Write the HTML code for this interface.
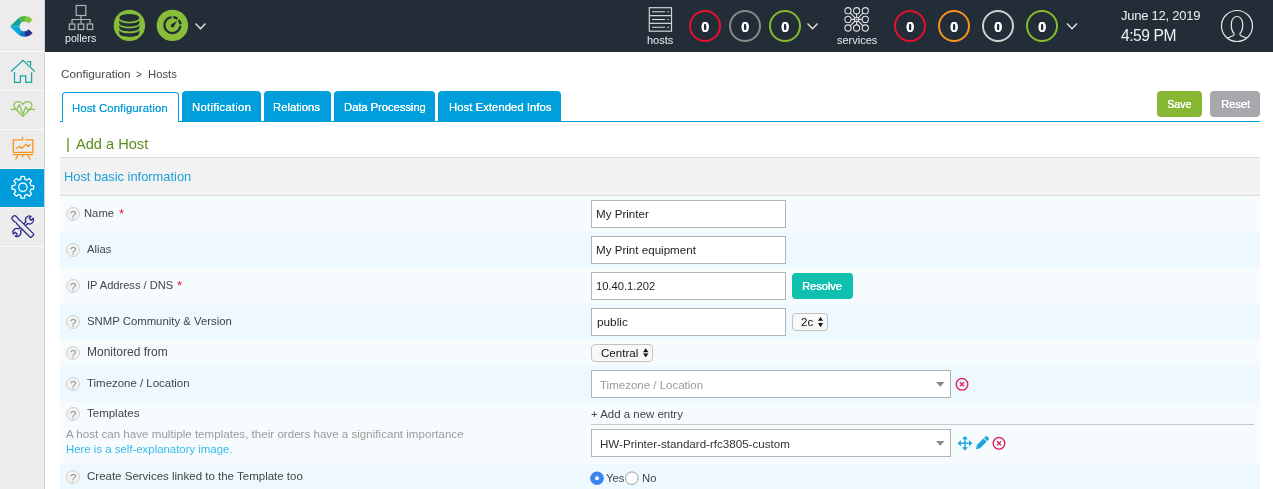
<!DOCTYPE html>
<html><head><meta charset="utf-8">
<style>
*{box-sizing:border-box;}
html,body{margin:0;padding:0;}
body{width:1273px;height:489px;overflow:hidden;position:relative;background:#fff;font-family:"Liberation Sans",sans-serif;}
.a{position:absolute;}
.t{position:absolute;white-space:nowrap;will-change:transform;}
#side{left:0;top:0;width:45px;height:489px;background:#ececec;border-right:1px solid #d2d2d2;}
.sep{position:absolute;left:0;width:44px;height:1px;background:#fafafa;}
#hdr{left:45px;top:0;width:1228px;height:52px;background:#232d38;}
.circ{position:absolute;width:32px;height:32px;border-radius:50%;border:2.5px solid;}
.tab{position:absolute;top:91px;height:30px;background:#009fdc;border-radius:4px 4px 0 0;}
.row{position:absolute;left:60px;width:1200px;}
.r1{background:#f6fcfe;}
.r2{background:#edf9fe;}
.help{position:absolute;width:14px;height:14px;border-radius:50%;border:1.4px solid #d0d0d0;background:#f2f2f2;}
.inp{position:absolute;left:591px;width:195px;height:28px;background:#fff;border:1px solid #b4b4b4;}
</style></head>
<body>
<div id="side" class="a">
<div class="sep" style="top:51px"></div>
<div class="sep" style="top:90px"></div>
<div class="sep" style="top:129px"></div>
<div class="sep" style="top:168px"></div>
<div class="sep" style="top:207px"></div>
<div class="sep" style="top:246px"></div>
<div class="a" style="left:0;top:169px;width:44px;height:38px;background:#009ddc"></div>
<svg class="a" style="left:0;top:0" width="44" height="246" viewBox="0 0 44 246">
    <!-- logo -->
    <defs><clipPath id="lc"><path d="M10 26.4 L18.3 18.2 Q21 16 24.8 16 Q29.5 16 32.6 19.8 L28.6 23.6 A5 5 0 1 0 28.6 29.2 L32.6 33 Q29.5 36.8 24.8 36.8 Q21 36.8 18.3 34.6 Z"/></clipPath></defs>
    <g clip-path="url(#lc)">
      <path d="M24.4 26.4 L5 26.4 L5 15 L14 10 Z" fill="#16a29a"/>
      <path d="M24.4 26.4 L14 10 L25.2 10 L25.2 26.4 Z" fill="#45b649"/>
      <path d="M24.4 26.4 L25.2 10 L40 10 L40 26.4 Z" fill="#8bc53f"/>
      <path d="M24.4 26.4 L5 26.4 L5 40 L14 42 Z" fill="#08a5e1"/>
      <path d="M24.4 26.4 L14 42 L25.6 42 L25.6 26.4 Z" fill="#0f78bf"/>
      <path d="M24.4 26.4 L25.6 42 L40 42 L40 26.4 Z" fill="#2d2e8f"/>
    </g>
    <!-- home -->
    <g fill="none" stroke="#1ba69f" stroke-width="1.25">
      <path d="M11.1 71.5 L23 60.4 L34.8 71.5"/>
      <path d="M27.3 61.7 H30.6 V66"/>
      <path d="M14.5 72.2 V82.4 H20.4 V75.8 H25.7 V82.4 H31.6 V72.2"/>
    </g>
    <!-- heart -->
    <g fill="none" stroke="#86c04d" stroke-width="1.2" stroke-linejoin="round">
      <path d="M22.9 116.3 L15.6 109 C13 106.4 13.3 102.6 16.4 101.9 C19 101.3 21.5 102.4 22.9 104.3 C24.3 102.4 26.8 101.3 29.4 101.9 C32.5 102.6 32.8 106.4 30.2 109 Z"/>
      <path d="M10.7 109.3 H16.8 L19.4 104.6 L22.9 114.3 L25.8 106.7 L27.4 109.6 L28.5 109.3 H34.9"/>
    </g>
    <!-- chart -->
    <g fill="none" stroke="#f7941d" stroke-width="1.3">
      <path d="M22.3 139.8 H13.3 V152.4 H32.8 V139.8 H25.4"/>
      <path d="M22.6 136.8 V140.5"/>
      <path d="M13 154.6 H33"/>
      <path d="M18 155 L15.5 159.5 M27.7 155 L30.3 159.5 M22.6 155 V157.5"/>
      <path d="M16 148.5 L19.8 146.3 L21.5 148.5 L26 144.3 L28.5 146.5 L30.3 144.2"/>
    </g>
    <!-- gear -->
    <g transform="translate(22.8 187.3)" fill="none" stroke="#fff" stroke-width="1.3">
      <circle r="4.2"/>
      <path stroke-linejoin="round" d="M-2.01 -8.05 L-1.71 -10.77 A10.9 10.9 0 0 1 1.71 -10.77 L2.01 -8.05 A8.3 8.3 0 0 1 4.27 -7.11 L6.41 -8.82 A10.9 10.9 0 0 1 8.82 -6.41 L7.11 -4.27 A8.3 8.3 0 0 1 8.05 -2.01 L10.77 -1.71 A10.9 10.9 0 0 1 10.77 1.71 L8.05 2.01 A8.3 8.3 0 0 1 7.11 4.27 L8.82 6.41 A10.9 10.9 0 0 1 6.41 8.82 L4.27 7.11 A8.3 8.3 0 0 1 2.01 8.05 L1.71 10.77 A10.9 10.9 0 0 1 -1.71 10.77 L-2.01 8.05 A8.3 8.3 0 0 1 -4.27 7.11 L-6.41 8.82 A10.9 10.9 0 0 1 -8.82 6.41 L-7.11 4.27 A8.3 8.3 0 0 1 -8.05 2.01 L-10.77 1.71 A10.9 10.9 0 0 1 -10.77 -1.71 L-8.05 -2.01 A8.3 8.3 0 0 1 -7.11 -4.27 L-8.82 -6.41 A10.9 10.9 0 0 1 -6.41 -8.82 L-4.27 -7.11 A8.3 8.3 0 0 1 -2.01 -8.05 Z"/>
    </g>
    <!-- tools -->
    <g fill="#ececec" stroke="#2b2e8c" stroke-width="1.3" stroke-linejoin="round">
      <path transform="translate(23.2 226.2) rotate(-45)" d="M-5.03 -1.2 L5.03 -1.2 A4 4 0 0 1 12.6 -1.4 L9.85 -1.4 L9.85 1.4 L12.6 1.4 A4 4 0 0 1 5.03 1.2 L-5.03 1.2 A4 4 0 0 1 -12.6 1.4 L-9.85 1.4 L-9.85 -1.4 L-12.6 -1.4 A4 4 0 0 1 -5.03 -1.2 Z"/>
      <path transform="translate(22.9 226.6) rotate(45)" d="M-12.5 -2.4 Q-14.2 -2.4 -14.2 0 Q-14.2 2.4 -12.5 2.4 L-9 2.4 Q-7.5 1.5 -6 2.4 L12.3 2.4 Q13.5 2.4 13.5 1.2 L13.5 -1.2 Q13.5 -2.4 12.3 -2.4 L-6 -2.4 Q-7.5 -1.5 -9 -2.4 Z"/>
    </g>
  </svg>
</div>
<div id="hdr" class="a"></div>
<svg class="a" style="left:0;top:0" width="1273" height="52" viewBox="0 0 1273 52">
  <!-- pollers -->
  <g fill="none" stroke="#b4b4b4" stroke-width="1.2">
    <rect x="76.2" y="5.5" width="9.6" height="10"/>
    <path d="M81 15.5 V19.5 M72 23.5 V19.5 H90 V23.5 M81 19.5 V23.5"/>
    <rect x="69.3" y="24" width="5.5" height="5.5"/>
    <rect x="78.2" y="24" width="5.5" height="5.5"/>
    <rect x="87.2" y="24" width="5.5" height="5.5"/>
  </g>
  <!-- db -->
  <circle cx="129.4" cy="25.4" r="15.7" fill="#88bd3a"/>
  <g fill="#232d38">
    <ellipse cx="129.25" cy="17.85" rx="10" ry="3.9"/>
    <path d="M119.25 19.6 C119.25 24.80 139.25 24.80 139.25 19.6 L139.25 22.7 C139.25 27.90 119.25 27.90 119.25 22.7 Z"/><path d="M119.25 24.5 C119.25 29.70 139.25 29.70 139.25 24.5 L139.25 27.6 C139.25 32.80 119.25 32.80 119.25 27.6 Z"/><path d="M119.25 29.4 C119.25 34.60 139.25 34.60 139.25 29.4 L139.25 33.1 C139.25 38.30 119.25 38.30 119.25 33.1 Z"/>
  </g>
  <!-- gauge -->
  <circle cx="172.4" cy="25.4" r="15.7" fill="#88bd3a"/>
  <path d="M173.15 17.08 A8.05 8.05 0 0 1 177.52 18.84 M178.71 20.03 A8.05 8.05 0 0 1 180.46 24.26 M180.46 25.94 A8.05 8.05 0 1 1 171.61 17.09" fill="none" stroke="#232d38" stroke-width="2.3"/>
  <path d="M171.2 24.6 L177.2 20.8 L173.6 26.9 Z" fill="#232d38"/>
  <circle cx="172.4" cy="25.7" r="1.7" fill="#232d38"/>
  <!-- chevron -->
  <path d="M195.5 23.5 L200.5 28.8 L205.5 23.5" fill="none" stroke="#e6e6e6" stroke-width="1.3"/>

  <!-- hosts icon -->
  <g fill="none" stroke="#d2d2d2" stroke-width="1.2">
    <rect x="649.3" y="7.7" width="22.2" height="23.5"/>
    <path d="M649.3 15.6 H671.5 M649.3 23.4 H671.5"/>
  </g>
  <g stroke="#e0e0e0" stroke-width="1.1">
    <path d="M652 11.7 H665 M652 19.5 H665 M652 27.3 H665"/>
  </g>
  <g fill="#e0e0e0"><rect x="667.5" y="11" width="1.2" height="1.4"/><rect x="667.5" y="18.8" width="1.2" height="1.4"/><rect x="667.5" y="26.6" width="1.2" height="1.4"/></g>
  <path d="M807.5 23.5 L812.5 28.8 L817.5 23.5" fill="none" stroke="#e6e6e6" stroke-width="1.3"/>

  <!-- services icon -->
  <g fill="none" stroke="#e0e0e0" stroke-width="1.1">
    <circle cx="848" cy="10.7" r="3.1"/><circle cx="856.6" cy="10.7" r="3.1"/><circle cx="865.3" cy="10.7" r="3.1"/>
    <circle cx="848" cy="19.4" r="3.1"/><circle cx="856.6" cy="19.4" r="2.2"/><circle cx="865.3" cy="19.4" r="3.1"/>
    <circle cx="848" cy="28" r="3.1"/><circle cx="856.6" cy="28" r="3.1"/><circle cx="865.3" cy="28" r="3.1"/>
    <path d="M851.2 19.4 H854.4 M858.8 19.4 H862 M856.6 13.8 V17.2 M856.6 21.6 V24.9 M850.2 12.9 L855 17.8 M863.1 12.9 L858.2 17.8 M850.2 25.8 L855 21 M863.1 25.8 L858.2 21"/>
  </g>
  <circle cx="856.6" cy="19.4" r="0.9" fill="#e0e0e0"/>
  <path d="M1067 23.5 L1072 28.8 L1077 23.5" fill="none" stroke="#e6e6e6" stroke-width="1.3"/>

  <!-- user -->
  <g fill="none" stroke="#e8e8e8" stroke-width="1.2">
    <circle cx="1237" cy="26" r="15.5"/>
    <path d="M1227.5 38 L1233.5 35.5 Q1234.3 35 1234 33.5 Q1230.5 29.5 1231.5 22.5 Q1232.5 16.5 1237 16.5 Q1241.5 16.5 1242.5 22.5 Q1243.5 29.5 1240 33.5 Q1239.7 35 1240.5 35.5 L1246.5 38"/>
  </g>
</svg>
<div class="t" style="left:65px;top:28px;font-size:10.6px;line-height:20px;color:#ebebeb;">pollers</div>
<div class="t" style="left:647px;top:30px;font-size:11px;line-height:20px;color:#ebebeb;">hosts</div>
<div class="t" style="left:837px;top:30px;font-size:11px;line-height:20px;color:#ebebeb;">services</div>
<div class="circ" style="left:689px;top:10px;border-color:#e8112d"></div>
<div class="t" style="left:700.7px;top:17px;font-size:14.6px;line-height:20px;color:#fff;font-weight:bold;text-shadow:0.3px 0 0 #fff;">0</div>
<div class="circ" style="left:729px;top:10px;border-color:#8a8a8a"></div>
<div class="t" style="left:740.7px;top:17px;font-size:14.6px;line-height:20px;color:#fff;font-weight:bold;text-shadow:0.3px 0 0 #fff;">0</div>
<div class="circ" style="left:769px;top:10px;border-color:#84bd2f"></div>
<div class="t" style="left:780.7px;top:17px;font-size:14.6px;line-height:20px;color:#fff;font-weight:bold;text-shadow:0.3px 0 0 #fff;">0</div>
<div class="circ" style="left:894px;top:10px;border-color:#e8112d"></div>
<div class="t" style="left:905.7px;top:17px;font-size:14.6px;line-height:20px;color:#fff;font-weight:bold;text-shadow:0.3px 0 0 #fff;">0</div>
<div class="circ" style="left:938px;top:10px;border-color:#f7931e"></div>
<div class="t" style="left:949.7px;top:17px;font-size:14.6px;line-height:20px;color:#fff;font-weight:bold;text-shadow:0.3px 0 0 #fff;">0</div>
<div class="circ" style="left:982px;top:10px;border-color:#cfcfcf"></div>
<div class="t" style="left:993.7px;top:17px;font-size:14.6px;line-height:20px;color:#fff;font-weight:bold;text-shadow:0.3px 0 0 #fff;">0</div>
<div class="circ" style="left:1026px;top:10px;border-color:#84bd2f"></div>
<div class="t" style="left:1037.7px;top:17px;font-size:14.6px;line-height:20px;color:#fff;font-weight:bold;text-shadow:0.3px 0 0 #fff;">0</div>
<div class="t" style="left:1121px;top:6px;font-size:13px;line-height:20px;color:#f0f0f0;letter-spacing:-0.25px;">June 12, 2019</div>
<div class="t" style="left:1121px;top:26px;font-size:15.6px;line-height:20px;color:#f0f0f0;letter-spacing:-0.45px;">4:59 PM</div>
<div class="t" style="left:60.5px;top:64px;font-size:11.7px;line-height:20px;color:#474747;">Configuration</div>
<div class="t" style="left:136px;top:65px;font-size:10px;line-height:20px;color:#474747;">&gt;</div>
<div class="t" style="left:148px;top:64px;font-size:11.3px;line-height:20px;color:#474747;">Hosts</div>
<div class="a" style="left:60px;top:121px;width:1200px;height:1px;background:#009fdc"></div>
<div class="a" style="left:62px;top:92px;width:117px;height:30px;background:#fff;border:1px solid #009fdc;border-bottom:none;border-radius:4px 4px 0 0;"></div>
<div class="tab" style="left:182px;width:79px;"></div>
<div class="tab" style="left:264px;width:67px;"></div>
<div class="tab" style="left:334px;width:101px;"></div>
<div class="tab" style="left:438px;width:123px;"></div>
<div class="t" style="left:72.4px;top:98px;font-size:11.3px;line-height:20px;color:#0d9fd8;letter-spacing:0.12px;text-shadow:0.1px 0 0 currentColor;">Host Configuration</div>
<div class="t" style="left:191.5px;top:97px;font-size:11.3px;line-height:20px;color:#fff;letter-spacing:0.27px;text-shadow:0.1px 0 0 currentColor;">Notification</div>
<div class="t" style="left:273.4px;top:97px;font-size:11.3px;line-height:20px;color:#fff;letter-spacing:-0.02px;text-shadow:0.1px 0 0 currentColor;">Relations</div>
<div class="t" style="left:343.5px;top:97px;font-size:11.3px;line-height:20px;color:#fff;letter-spacing:-0.08px;text-shadow:0.1px 0 0 currentColor;">Data Processing</div>
<div class="t" style="left:448.7px;top:97px;font-size:11.3px;line-height:20px;color:#fff;letter-spacing:0.04px;text-shadow:0.1px 0 0 currentColor;">Host Extended Infos</div>
<div class="a" style="left:1157px;top:91px;width:45px;height:26px;background:#88b833;border-radius:4px;"></div>
<div class="a" style="left:1210px;top:91px;width:50px;height:26px;background:#a7a8ab;border-radius:4px;"></div>
<div class="t" style="left:1167px;top:94px;font-size:10.6px;line-height:20px;color:#fff;text-shadow:0.4px 0 0 #fff;">Save</div>
<div class="t" style="left:1220.7px;top:94px;font-size:11.1px;line-height:20px;color:#fff;text-shadow:0.4px 0 0 #fff;">Reset</div>
<div class="t" style="left:65.5px;top:134px;font-size:15px;line-height:20px;color:#5b8a1e;">|</div>
<div class="t" style="left:75.5px;top:134px;font-size:14.6px;line-height:20px;color:#5b8a1e;">Add a Host</div>
<div class="row" style="top:157px;height:39px;background:#f2f2f2;border-top:1px solid #dedede;border-bottom:1px solid #dedede;"></div>
<div class="t" style="left:64.4px;top:167px;font-size:12.87px;line-height:20px;color:#1ba0d8;">Host basic information</div>
<div class="row r1" style="top:196px;height:36px;"></div>
<div class="row r2" style="top:232px;height:36px;"></div>
<div class="row r1" style="top:268px;height:36px;"></div>
<div class="row r2" style="top:304px;height:36px;"></div>
<div class="row r1" style="top:340px;height:26px;"></div>
<div class="row r2" style="top:366px;height:36px;"></div>
<div class="row r1" style="top:402px;height:62px;"></div>
<div class="row r2" style="top:464px;height:25px;"></div>
<div class="help" style="left:66.25px;top:207px;"></div>
<div class="t" style="left:70.2px;top:205px;font-size:11.4px;line-height:20px;color:#8c8c8c;">?</div>
<div class="t" style="left:84.3px;top:203px;font-size:11.25px;line-height:20px;color:#454545;">Name</div>
<div class="help" style="left:66.25px;top:243px;"></div>
<div class="t" style="left:70.2px;top:241px;font-size:11.4px;line-height:20px;color:#8c8c8c;">?</div>
<div class="t" style="left:86.9px;top:239px;font-size:11.2px;line-height:20px;color:#454545;">Alias</div>
<div class="help" style="left:66.25px;top:279px;"></div>
<div class="t" style="left:70.2px;top:277px;font-size:11.4px;line-height:20px;color:#8c8c8c;">?</div>
<div class="t" style="left:87.2px;top:275px;font-size:11.1px;line-height:20px;color:#454545;">IP Address / DNS</div>
<div class="help" style="left:66.25px;top:315px;"></div>
<div class="t" style="left:70.2px;top:313px;font-size:11.4px;line-height:20px;color:#8c8c8c;">?</div>
<div class="t" style="left:87.2px;top:311px;font-size:11.35px;line-height:20px;color:#454545;">SNMP Community &amp; Version</div>
<div class="help" style="left:66.25px;top:346px;"></div>
<div class="t" style="left:70.2px;top:344px;font-size:11.4px;line-height:20px;color:#8c8c8c;">?</div>
<div class="t" style="left:87.2px;top:342px;font-size:12px;line-height:20px;color:#454545;">Monitored from</div>
<div class="help" style="left:66.25px;top:377px;"></div>
<div class="t" style="left:70.2px;top:375px;font-size:11.4px;line-height:20px;color:#8c8c8c;">?</div>
<div class="t" style="left:87.2px;top:373px;font-size:11.45px;line-height:20px;color:#454545;">Timezone / Location</div>
<div class="help" style="left:66.25px;top:407px;"></div>
<div class="t" style="left:70.2px;top:405px;font-size:11.4px;line-height:20px;color:#8c8c8c;">?</div>
<div class="t" style="left:87.4px;top:403px;font-size:11.5px;line-height:20px;color:#454545;">Templates</div>
<div class="help" style="left:66.25px;top:470px;"></div>
<div class="t" style="left:70.2px;top:468px;font-size:11.4px;line-height:20px;color:#8c8c8c;">?</div>
<div class="t" style="left:87.2px;top:466px;font-size:11.5px;line-height:20px;color:#454545;">Create Services linked to the Template too</div>
<div class="t" style="left:118.5px;top:204px;font-size:13px;line-height:20px;color:#e8143c;">*</div>
<div class="t" style="left:177px;top:276px;font-size:13px;line-height:20px;color:#e8143c;">*</div>
<div class="inp" style="top:200px;"></div>
<div class="inp" style="top:236px;"></div>
<div class="inp" style="top:272px;"></div>
<div class="inp" style="top:308px;"></div>
<div class="t" style="left:596.4px;top:204px;font-size:11.6px;line-height:20px;color:#1e1e1e;">My Printer</div>
<div class="t" style="left:596.4px;top:240px;font-size:11.6px;line-height:20px;color:#1e1e1e;">My Print equipment</div>
<div class="t" style="left:596.1px;top:276px;font-size:11.2px;line-height:20px;color:#1e1e1e;">10.40.1.202</div>
<div class="t" style="left:596.5px;top:312px;font-size:11.8px;line-height:20px;color:#1e1e1e;">public</div>
<div class="a" style="left:792px;top:273px;width:61px;height:26px;background:#10bfae;border-radius:4px;"></div>
<div class="t" style="left:802.2px;top:276px;font-size:11px;line-height:20px;color:#fff;text-shadow:0.4px 0 0 #fff;">Resolve</div>
<div class="a" style="left:792px;top:313px;width:36px;height:18px;background:#f8f8f8;border:1px solid #c2c2c2;border-radius:4px;"></div>
<div class="t" style="left:801.3px;top:312px;font-size:11.6px;line-height:20px;color:#111;">2c</div>
<div class="a" style="left:591px;top:344px;width:62px;height:18px;background:#f8f8f8;border:1px solid #c2c2c2;border-radius:4px;"></div>
<div class="t" style="left:600.6px;top:343px;font-size:11.6px;line-height:20px;color:#111;">Central</div>
<div class="inp" style="top:370px;width:360px;"></div>
<div class="t" style="left:600.2px;top:375px;font-size:11.5px;line-height:20px;color:#9a9a9a;">Timezone / Location</div>
<div class="t" style="left:591.3px;top:404px;font-size:11.45px;line-height:20px;color:#454545;">+ Add a new entry</div>
<div class="a" style="left:591px;top:424px;width:663px;height:1px;background:#c8c8c8"></div>
<div class="inp" style="top:429px;width:360px;"></div>
<div class="t" style="left:600.4px;top:434px;font-size:11.6px;line-height:20px;color:#333;">HW-Printer-standard-rfc3805-custom</div>
<div class="t" style="left:66.3px;top:424px;font-size:11.6px;line-height:20px;color:#9b9b9b;">A host can have multiple templates, their orders have a significant importance</div>
<div class="t" style="left:66px;top:439px;font-size:11.4px;line-height:20px;color:#37b8ec;">Here is a self-explanatory image.</div>
<div class="t" style="left:606.4px;top:468px;font-size:11.3px;line-height:20px;color:#454545;">Yes</div>
<div class="t" style="left:641.9px;top:468px;font-size:11.3px;line-height:20px;color:#454545;">No</div>
<svg class="a" style="left:0;top:0" width="1273" height="489" viewBox="0 0 1273 489">
  <!-- select arrows -->
  <path d="M818 320.8 L820.5 316.9 L823 320.8 Z M818 323.1 L823 323.1 L820.5 327.2 Z" fill="#111"/>
  <path d="M643.1 352.2 L645.75 348.3 L648.4 352.2 Z M643.1 353.4 L648.4 353.4 L645.75 357.3 Z" fill="#111"/>
  <path d="M936 382 H944.5 L940.25 386.8 Z" fill="#888"/>
  <path d="M936 441 H944.5 L940.25 445.8 Z" fill="#888"/>
  <!-- red x circles -->
  <g fill="none" stroke="#e0245e" stroke-width="1.4">
    <circle cx="962" cy="384.3" r="5.8"/>
    <path d="M960 382.3 L964 386.3 M964 382.3 L960 386.3"/>
    <circle cx="999" cy="443.3" r="5.8"/>
    <path d="M997 441.3 L1001 445.3 M1001 441.3 L997 445.3"/>
  </g>
  <!-- move icon -->
  <g fill="#1fa3dc">
    <path d="M965 436 L968 439.2 H961.8 Z M965 450.5 L961.8 447.3 H968 Z M957.7 443.2 L960.9 440 V446.4 Z M972.3 443.2 L969.1 440 V446.4 Z"/>
    <rect x="964.3" y="438.5" width="1.4" height="9.5"/>
    <rect x="960.5" y="442.5" width="9" height="1.4"/>
  </g>
  <!-- pencil -->
  <g fill="#1fa3dc" transform="translate(982.2 442.9) rotate(-45) scale(1.08)">
    <path d="M-4.8 -2.1 L3.8 -2.1 L3.8 2.1 L-4.8 2.1 Z M4.6 -2.1 L5.9 -2.1 Q7.7 -2.1 7.7 0 Q7.7 2.1 5.9 2.1 L4.6 2.1 Z M-4.8 -2.1 L-8.2 0 L-4.8 2.1 Z"/>
  </g>
  <!-- radios -->
  <circle cx="597" cy="478.2" r="6.8" fill="#3a86f0"/>
  <circle cx="597" cy="478.2" r="2" fill="#fff"/>
  <circle cx="631.8" cy="478.2" r="6.3" fill="#fff" stroke="#9a9a9a" stroke-width="1"/>
</svg>
</body></html>
